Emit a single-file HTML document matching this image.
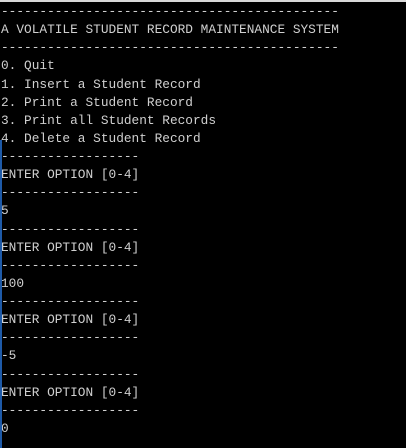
<!DOCTYPE html>
<html><head><style>
html,body{margin:0;padding:0;background:#000;}
body{width:406px;height:448px;overflow:hidden;position:relative;}
.top{position:absolute;left:0;top:0;width:406px;height:2px;background:#d8d8d8;}
.left{position:absolute;left:0;top:140px;width:2px;height:308px;background:#1e5aa8;}
pre{position:absolute;left:1px;top:3px;margin:0;font-family:"Liberation Mono",monospace;font-size:12.8px;line-height:18.13px;color:#d0d0d0;}
</style></head><body>
<div class="top"></div>
<pre>--------------------------------------------
A VOLATILE STUDENT RECORD MAINTENANCE SYSTEM
--------------------------------------------
0. Quit
1. Insert a Student Record
2. Print a Student Record
3. Print all Student Records
4. Delete a Student Record
------------------
ENTER OPTION [0-4]
------------------
5
------------------
ENTER OPTION [0-4]
------------------
100
------------------
ENTER OPTION [0-4]
------------------
-5
------------------
ENTER OPTION [0-4]
------------------
0</pre>
<div class="left"></div>
</body></html>
